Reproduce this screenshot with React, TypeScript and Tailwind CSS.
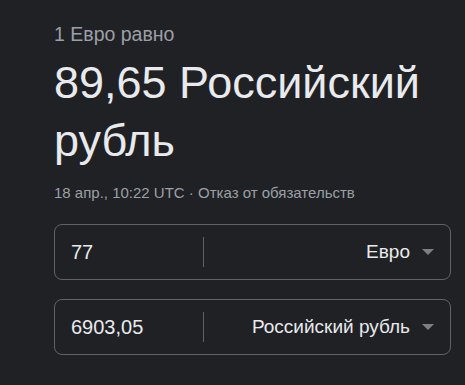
const font = { fontFamily: '"Liberation Sans", Arial, sans-serif' };

function Row({ value, currency }: { value: string; currency: string }) {
  return (
    <div className="flex items-center h-[56px] rounded-lg border border-[#5f6368] bg-[#202124]">
      <div className="w-[148px] pl-4 text-[20px] text-[#e8eaed]">{value}</div>
      <div className="w-px h-[30px] bg-[#5f6368]" />
      <div className="flex-1 flex items-center justify-end pr-[16px] text-[19px] text-[#e8eaed]">
        <span>{currency}</span>
        <svg width="12" height="6" viewBox="0 0 12 6" className="ml-[12px]">
          <path d="M0 0h12L6 6z" fill="#9aa0a6" fillOpacity="0.75" />
        </svg>
      </div>
    </div>
  );
}

export default function App() {
  return (
    <div className="w-[465px] h-[385px] bg-[#202124] pl-[54px] pr-[14px] pt-[22px] overflow-hidden" style={font}>
      <div className="text-[19.5px] leading-[24px] text-[#9aa0a6]">1 Евро равно</div>
      <div className="mt-[8px] text-[45px] leading-[58px] text-[#e8eaed]">89,65 Российский рубль</div>
      <div className="mt-[13px] text-[15px] leading-[20px] text-[#9aa0a6]">
        18 апр., 10:22 UTC · Отказ от обязательств
      </div>
      <div className="mt-[21px] flex flex-col gap-[19px]">
        <Row value="77" currency="Евро" />
        <Row value="6903,05" currency="Российский рубль" />
      </div>
    </div>
  );
}
